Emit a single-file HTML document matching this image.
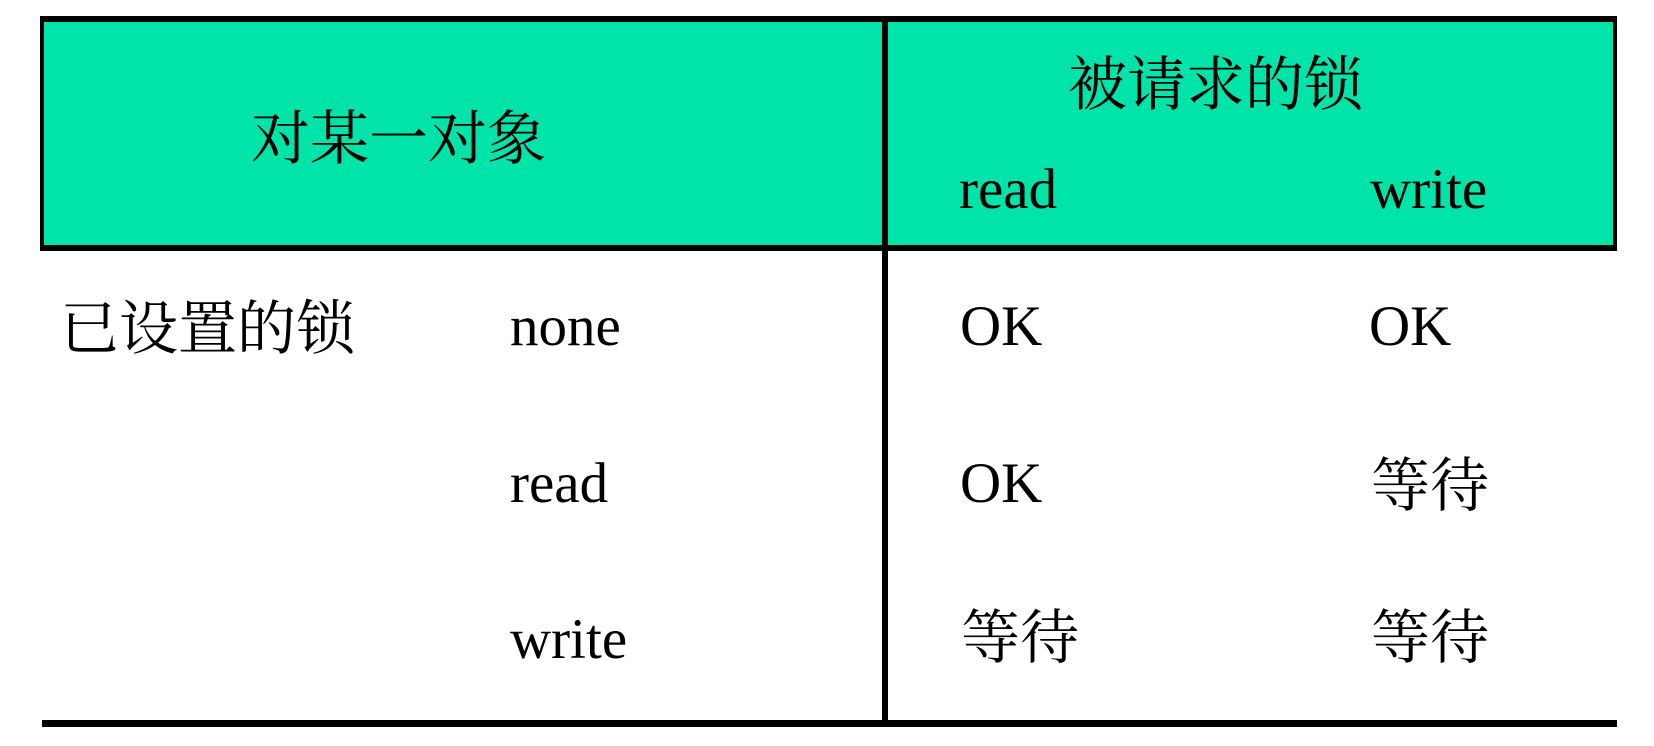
<!DOCTYPE html>
<html><head><meta charset="utf-8"><style>
body{margin:0;width:1654px;height:746px;background:#fff;position:relative;overflow:hidden}
.b{position:absolute;background:#000}
.t{position:absolute;font-size:57px;line-height:1;white-space:nowrap;color:#000}
.l{font-family:"Liberation Serif",serif}
.c{font-family:"Liberation Serif","Noto Serif CJK SC",serif;font-size:59px}
</style></head><body>
<div style="position:absolute;left:40px;top:16px;width:1577px;height:233px;background:#00e4a9"></div>
<div class="b" style="left:40px;top:16px;width:1577px;height:6px"></div>
<div class="b" style="left:40px;top:245px;width:1577px;height:6px"></div>
<div class="b" style="left:40px;top:16px;width:4px;height:235px"></div>
<div class="b" style="left:1613px;top:16px;width:4px;height:235px"></div>
<div class="b" style="left:882px;top:22px;width:6px;height:705px"></div>
<div class="b" style="left:42px;top:720px;width:1575px;height:7px"></div>

<div class="t c" style="left:251px;top:110px">对某一对象</div>
<div class="t c" style="left:1068px;top:56px">被请求的锁</div>
<div class="t l" style="left:959px;top:161px">read</div>
<div class="t l" style="left:1370px;top:161px">write</div>

<div class="t c" style="left:60px;top:300px">已设置的锁</div>
<div class="t l" style="left:510px;top:298px">none</div>
<div class="t l" style="left:960px;top:298px">OK</div>
<div class="t l" style="left:1369px;top:298px">OK</div>

<div class="t l" style="left:510px;top:455px">read</div>
<div class="t l" style="left:960px;top:455px">OK</div>
<div class="t c" style="left:1371px;top:457px">等待</div>

<div class="t l" style="left:510px;top:611px">write</div>
<div class="t c" style="left:961px;top:609px">等待</div>
<div class="t c" style="left:1371px;top:609px">等待</div>
</body></html>
